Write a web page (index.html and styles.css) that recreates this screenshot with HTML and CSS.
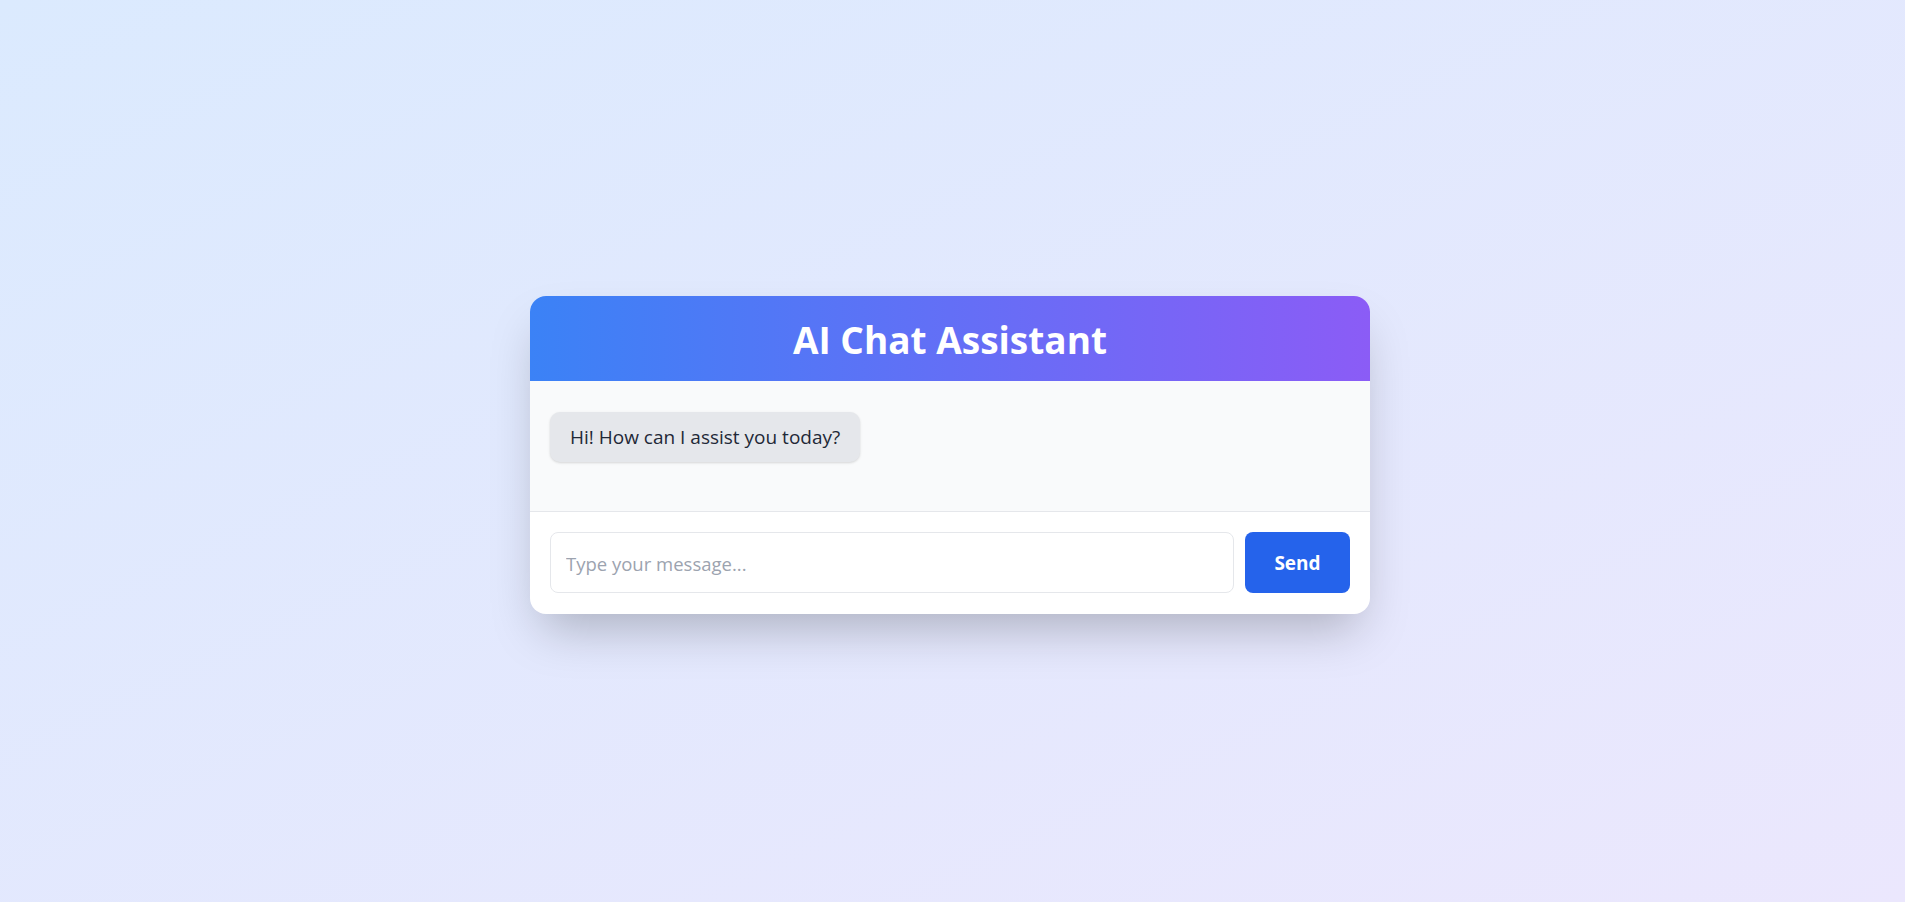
FILE: index.html
```html
<!DOCTYPE html>
<html lang="en">
<head>
<meta charset="utf-8">
<title>AI Chat Assistant</title>
<link rel="stylesheet" href="styles.css">
</head>
<body>
<main class="page">
  <section class="card">
    <header class="card-header">
      <h1 class="title">AI Chat Assistant</h1>
    </header>
    <div class="messages">
      <div class="bubble">Hi! How can I assist you today?</div>
    </div>
    <form class="composer">
      <input class="composer-input" type="text" placeholder="Type your message...">
      <button class="composer-send" type="button">Send</button>
    </form>
  </section>
</main>
</body>
</html>
```
FILE: styles.css
```css
* { box-sizing: border-box; }
html, body { margin: 0; padding: 0; }
body {
  font-family: "Open Sans", "Noto Sans", "Liberation Sans", sans-serif;
  background: linear-gradient(to bottom right, #dbeafe, #ebe7fd);
  min-height: 100vh;
}
.page {
  min-height: 100vh;
  display: flex;
  align-items: center;
  justify-content: center;
  padding-right: 5px;
  padding-top: 8px;
}
.card {
  width: 840px;
  background: #ffffff;
  border-radius: 16px;
  overflow: hidden;
  box-shadow: 0 25px 50px -12px rgba(0, 0, 0, 0.25);
}
.card-header {
  background: linear-gradient(to right, #3b82f6, #8b5cf6);
  padding: 24px 24px 21px;
  text-align: center;
}
.title {
  margin: 0;
  color: #ffffff;
  font-size: 37px;
  line-height: 40px;
  font-weight: 700;
}
.messages {
  background: #f9fafb;
  height: 131px;
  padding: 31px 20px 20px;
  border-bottom: 1px solid #e5e7eb;
}
.bubble {
  display: inline-block;
  background: #e5e7eb;
  color: #1f2937;
  font-size: 19px;
  line-height: 28px;
  padding: 11px 20px;
  border-radius: 10px;
  box-shadow: 0 1px 3px rgba(0, 0, 0, 0.1), 0 1px 2px rgba(0, 0, 0, 0.05);
}
.composer {
  display: flex;
  gap: 11px;
  padding: 20px 20px 21px;
  margin: 0;
}
.composer-input {
  flex: 1;
  height: 61px;
  border: 1px solid #e5e7eb;
  border-radius: 8px;
  padding: 2px 15px 0;
  font-family: inherit;
  font-size: 18.5px;
  color: #1f2937;
  outline: none;
  background: #ffffff;
}
.composer-input::placeholder { color: #9ca3af; }
.composer-send {
  width: 105px;
  border: none;
  border-radius: 8px;
  background: #2563eb;
  color: #ffffff;
  font-family: inherit;
  font-size: 19px;
  font-weight: 700;
  padding-top: 2px;
  cursor: pointer;
}
```
